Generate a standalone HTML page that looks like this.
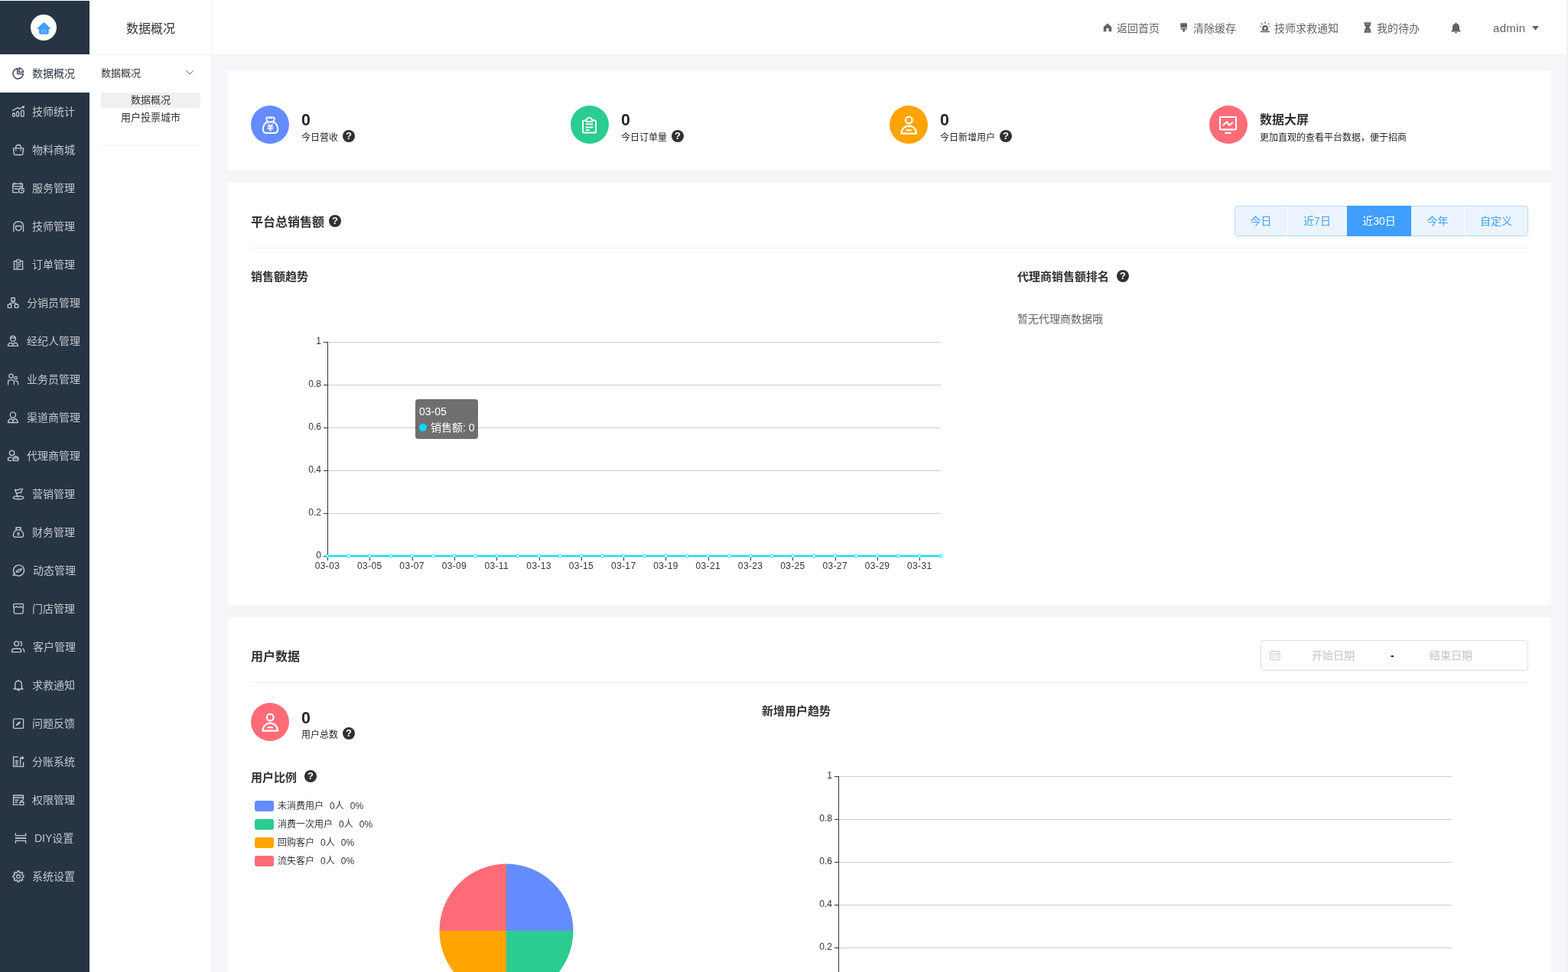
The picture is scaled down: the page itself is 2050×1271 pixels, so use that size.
<!DOCTYPE html>
<html lang="zh-CN"><head><meta charset="utf-8"><title>数据概况</title>
<style>
*{box-sizing:border-box;margin:0;padding:0}
html,body{width:2050px;height:1271px;overflow:hidden;background:#f5f6fa;}
#root{position:absolute;left:0;top:0;width:2050px;height:1271px;overflow:hidden;will-change:transform;background:#f5f6fa}
body{font-family:"Liberation Sans", "Noto Sans CJK SC", sans-serif;font-size:14px;color:#303133;position:relative;}
.abs{position:absolute}
.t{position:absolute;white-space:nowrap;line-height:1}
#side1{position:absolute;left:0;top:0;width:117px;height:1271px;background:#273444;border-top:1px solid #fff}
#side2{position:absolute;left:117px;top:0;width:160px;height:1271px;background:#fff;border-right:1px solid #f0f0f0}
#top{position:absolute;left:277px;top:0;width:1773px;height:72px;background:#fff;border-bottom:1px solid #f0f0f0}
.card{position:absolute;left:298px;width:1730px;background:#fff}
.mi{position:absolute;left:0;width:117px;height:50px;color:#c4c7cb;font-size:14px;margin-top:-1px}
.mi.on{background:#fff;color:#273444}
.mi svg{position:absolute;top:17px;width:16px;height:16px;overflow:visible}
.mi span{position:absolute;top:0;line-height:50px;white-space:nowrap}
.q{position:absolute;width:16px;height:16px;border-radius:50%;background:#303133;color:#fff;font-weight:bold;font-size:13px;line-height:16px;text-align:center}
.circ{position:absolute;width:50px;height:50px;border-radius:50%}
.num{position:absolute;font-size:22px;transform:scaleX(0.97);transform-origin:0 0;font-weight:bold;line-height:1;color:#262626}
.sub{position:absolute;font-size:12px;line-height:1;color:#262626;white-space:nowrap}
.h1{position:absolute;font-size:16px;font-weight:bold;line-height:1;color:#303133;white-space:nowrap}
.h2{position:absolute;font-size:14px;font-weight:bold;line-height:1;color:#303133;white-space:nowrap}
.hr{position:absolute;height:1px;background:#f0f0f0}
.nav{position:absolute;top:0;line-height:74px;font-size:14px;color:#606266;white-space:nowrap}
</style></head>
<body>
<div id="root">
<div id="side1">
<div class="abs" style="left:40px;top:18px;width:34px;height:34px;border-radius:50%;background:#fff"></div>
<svg class="abs" style="left:48px;top:26px" width="19" height="19" viewBox="0 0 19 19"><path d="M9.35 2.2 Q9.9 2.2 10.4 2.7 L18.2 10.2 Q18.6 10.9 17.8 10.9 H15.8 V15.6 Q15.8 17.8 13.6 17.8 H5.2 Q3 17.8 3 15.6 V10.9 H0.9 Q0.1 10.9 0.5 10.2 L8.3 2.7 Q8.8 2.2 9.35 2.2 Z" fill="#409eff"/><path d="M7.3 15.8 V13 L9.4 11.4 L11.5 13 V15.8" fill="none" stroke="#a6d2ff" stroke-width="1"/></svg>
<div class="mi on" style="top:71px"><svg style="left:16px" viewBox="0 0 16 16" fill="none" stroke="currentColor" stroke-width="1.35" stroke-linecap="round" stroke-linejoin="round"><path d="M6.8 1.6 A6.7 6.7 0 1 0 14.3 8.6 H6.8 Z"/><path d="M8.9 1 V6.4 H14.6 A6 6 0 0 0 8.9 1Z"/></svg><span style="left:42px">数据概况</span></div>
<div class="mi" style="top:121px"><svg style="left:16px" viewBox="0 0 16 16" fill="none" stroke="currentColor" stroke-width="1.35" stroke-linecap="round" stroke-linejoin="round"><rect x="0.5" y="10" width="2.9" height="4.4" rx="1.4"/><rect x="5.6" y="8" width="3.1" height="6.4" rx="1.4"/><rect x="11.6" y="6.4" width="3.6" height="8" rx="1.5"/><path d="M0.4 6.6 L7.4 2.6 L9.2 4.4 L15.4 1.4 M13.4 1.2 L15.5 1.3 L14.6 3.2"/></svg><span style="left:42px">技师统计</span></div>
<div class="mi" style="top:171px"><svg style="left:16px" viewBox="0 0 16 16" fill="none" stroke="currentColor" stroke-width="1.35" stroke-linecap="round" stroke-linejoin="round"><path d="M1.5 5.8 H14.7 L13.8 13.4 Q13.6 14.5 12.4 14.5 H3.8 Q2.6 14.5 2.4 13.4 Z"/><path d="M4.7 5.8 V4.8 Q4.7 1.5 8.1 1.5 Q11.5 1.5 11.5 4.8 V5.8"/><path d="M4.8 8.3 V8.5 M11.3 8.3 V8.5" stroke-width="1.7"/></svg><span style="left:42px">物料商城</span></div>
<div class="mi" style="top:221px"><svg style="left:16px" viewBox="0 0 16 16" fill="none" stroke="currentColor" stroke-width="1.35" stroke-linecap="round" stroke-linejoin="round"><path d="M7.2 13.6 H0.8 V2.4 H13.4 V6.6"/><path d="M3 1 V3.2 M11.2 1 V3.2 M0.8 5.6 H13.4 M3.2 9 H7.4"/><circle cx="11.9" cy="11" r="3.3"/><path d="M11.9 9.4 V11.2 H13.2" stroke-width="1"/></svg><span style="left:42px">服务管理</span></div>
<div class="mi" style="top:271px"><svg style="left:16px" viewBox="0 0 16 16" fill="none" stroke="currentColor" stroke-width="1.35" stroke-linecap="round" stroke-linejoin="round"><path d="M1.9 14.8 V8 Q1.9 1.7 8.2 1.7 Q14.5 1.7 14.5 8 V14.8"/><path d="M4.6 7.5 H11.8 V9.6 Q11.8 13.5 8.2 13.5 Q4.6 13.5 4.6 9.6 Z"/></svg><span style="left:42px">技师管理</span></div>
<div class="mi" style="top:321px"><svg style="left:16px" viewBox="0 0 16 16" fill="none" stroke="currentColor" stroke-width="1.35" stroke-linecap="round" stroke-linejoin="round"><path d="M5.4 3.5 H2.4 V14.4 H13.6 V3.5 H10.6"/><path d="M5.4 4.8 V3.2 Q5.4 1.3 8 1.3 Q10.6 1.3 10.6 3.2 V4.8 Z"/><path d="M5 7.4 H11 M5 9.9 H11 M5 12.3 H8"/></svg><span style="left:42px">订单管理</span></div>
<div class="mi" style="top:371px"><svg style="left:9px" viewBox="0 0 16 16" fill="none" stroke="currentColor" stroke-width="1.35" stroke-linecap="round" stroke-linejoin="round"><rect x="5.8" y="1.5" width="4.6" height="4.2" rx="0.4"/><rect x="1.3" y="10.1" width="4.6" height="4.2" rx="0.4"/><rect x="10.3" y="10.1" width="4.6" height="4.2" rx="0.4"/><path d="M8.1 5.8 V7.6 M3.6 10 Q3.6 7.8 8.1 7.8 Q12.6 7.8 12.6 10"/></svg><span style="left:35px">分销员管理</span></div>
<div class="mi" style="top:421px"><svg style="left:9px" viewBox="0 0 16 16" fill="none" stroke="currentColor" stroke-width="1.35" stroke-linecap="round" stroke-linejoin="round"><circle cx="7.9" cy="4.7" r="3.4"/><path d="M4.6 3.8 H11.2"/><path d="M1.4 14.4 Q1.4 10.6 5.6 10.1 L7.9 12.2 L10.2 10.1 Q14.4 10.6 14.4 14.4 Z M7.9 12.2 V14.4"/></svg><span style="left:35px">经纪人管理</span></div>
<div class="mi" style="top:471px"><svg style="left:9px" viewBox="0 0 16 16" fill="none" stroke="currentColor" stroke-width="1.35" stroke-linecap="round" stroke-linejoin="round"><circle cx="5.5" cy="3.7" r="2.6"/><path d="M1.6 14.7 V11.6 Q1.6 8.9 4.4 8.9 H6.6 Q9.4 8.9 9.4 11.6 V14.7"/><circle cx="11.7" cy="6.2" r="1.8"/><path d="M11.2 10.3 H12 Q14.6 10.3 14.6 12.6 V14.7"/></svg><span style="left:35px">业务员管理</span></div>
<div class="mi" style="top:521px"><svg style="left:9px" viewBox="0 0 16 16" fill="none" stroke="currentColor" stroke-width="1.35" stroke-linecap="round" stroke-linejoin="round"><circle cx="7.9" cy="4.5" r="3.6"/><path d="M1.4 14.5 Q1.8 10.6 5.8 9.4 L7.9 11.8 L10 9.4 Q14 10.6 14.4 14.5 Z M7.9 11.8 V14.4"/></svg><span style="left:35px">渠道商管理</span></div>
<div class="mi" style="top:571px"><svg style="left:9px" viewBox="0 0 16 16" fill="none" stroke="currentColor" stroke-width="1.35" stroke-linecap="round" stroke-linejoin="round"><circle cx="6.6" cy="4.3" r="3.2"/><path d="M6 9.8 Q1.4 9.8 1.4 12.2 Q1.4 14.4 4 14.4 H6"/><rect x="8" y="9.7" width="7" height="4.7" rx="1"/><path d="M10.1 9.6 V8.7 Q10.1 8.1 10.7 8.1 H12.3 Q12.9 8.1 12.9 8.7 V9.6 M8 11.9 H15" stroke-width="1"/></svg><span style="left:35px">代理商管理</span></div>
<div class="mi" style="top:621px"><svg style="left:16px" viewBox="0 0 16 16" fill="none" stroke="currentColor" stroke-width="1.35" stroke-linecap="round" stroke-linejoin="round"><ellipse cx="8" cy="12.7" rx="6.8" ry="2"/><path d="M3.6 2.2 L7.4 12.6 M3.6 2.2 Q6 3.4 8.4 2.2 Q10.8 1 13.6 1.6 Q11.4 4 11.6 6.4 Q9 5.6 7 6.8 Q6 7.4 5.4 7.2"/></svg><span style="left:42px">营销管理</span></div>
<div class="mi" style="top:671px"><svg style="left:16px" viewBox="0 0 16 16" fill="none" stroke="currentColor" stroke-width="1.35" stroke-linecap="round" stroke-linejoin="round"><path d="M5.6 4.6 L4.6 2.4 Q5.4 1.2 6.6 2 Q8 0.8 9.4 2 Q10.6 1.2 11.4 2.4 L10.4 4.6"/><path d="M5.4 4.8 H10.6 Q14.6 8 14.6 11.4 Q14.6 14.4 11.6 14.4 H4.4 Q1.4 14.4 1.4 11.4 Q1.4 8 5.4 4.8Z"/><path d="M6.6 7.8 L8 9.6 L9.4 7.8 M8 9.6 V12.4 M6.6 9.9 H9.4 M6.6 11.2 H9.4" stroke-width="0.9"/></svg><span style="left:42px">财务管理</span></div>
<div class="mi" style="top:721px"><svg style="left:16px" viewBox="0 0 16 16" fill="none" stroke="currentColor" stroke-width="1.35" stroke-linecap="round" stroke-linejoin="round"><path d="M3.3 12.6 A7 7 0 1 1 5.6 14.3 L0.9 13.8 Z"/><path d="M5 10.2 Q6.6 6.4 12.4 5.9 Q10.8 9.8 5 10.2 Z" stroke-width="1.2"/></svg><span style="left:43px">动态管理</span></div>
<div class="mi" style="top:771px"><svg style="left:16px" viewBox="0 0 16 16" fill="none" stroke="currentColor" stroke-width="1.35" stroke-linecap="round" stroke-linejoin="round"><path d="M2.3 6.6 V12.6 Q2.3 14.4 4.1 14.4 H12.3 Q14.1 14.4 14.1 12.6 V6.6"/><path d="M3.4 1.6 H13 Q14.8 1.6 14.8 3.4 V4.4 Q14.8 6.1 13 6.1 Q11.4 6.1 10.8 4.8 Q10 6.1 8.2 6.1 Q6.4 6.1 5.6 4.8 Q5 6.1 3.4 6.1 Q1.6 6.1 1.6 4.4 V3.4 Q1.6 1.6 3.4 1.6 Z"/></svg><span style="left:42px">门店管理</span></div>
<div class="mi" style="top:821px"><svg style="left:16px" viewBox="0 0 16 16" fill="none" stroke="currentColor" stroke-width="1.35" stroke-linecap="round" stroke-linejoin="round"><circle cx="5.6" cy="3.6" r="3"/><path d="M-0.4 14.6 V13 Q-0.4 10.2 2.6 10.2 H8.6 Q11.6 10.2 11.6 13 V14.6 Z"/><path d="M10.6 1 Q12.6 1.8 12.6 3.8 Q12.6 5.6 11 6.4 M13.6 10.2 Q15.6 11 15.6 13.4 V14.6"/></svg><span style="left:43px">客户管理</span></div>
<div class="mi" style="top:871px"><svg style="left:16px" viewBox="0 0 16 16" fill="none" stroke="currentColor" stroke-width="1.35" stroke-linecap="round" stroke-linejoin="round"><path d="M8.1 1.2 V2.2 M3.8 11.4 V7.2 Q3.8 2.4 8.1 2.4 Q12.4 2.4 12.4 7.2 V11.4 L14 13 H2.2 Z M6.8 14.6 H9.4"/></svg><span style="left:42px">求救通知</span></div>
<div class="mi" style="top:921px"><svg style="left:16px" viewBox="0 0 16 16" fill="none" stroke="currentColor" stroke-width="1.35" stroke-linecap="round" stroke-linejoin="round"><rect x="1.6" y="1.8" width="13" height="12.6" rx="2"/><path d="M5.4 10.4 L5.8 8.8 L9.6 5.6 L10.8 6.8 L7 10 Z" fill="currentColor" stroke-width="0.8"/></svg><span style="left:42px">问题反馈</span></div>
<div class="mi" style="top:971px"><svg style="left:16px" viewBox="0 0 16 16" fill="none" stroke="currentColor" stroke-width="1.35" stroke-linecap="round" stroke-linejoin="round"><path d="M14.6 9 V14.4 H1.6 V1.6 H7.6"/><path d="M10.6 12 V3 H14.4 M13 1.6 L14.8 3 L13 4.4"/><path d="M3.8 6.8 H8 M3.8 9.2 H8 M5.9 6 V11.6 M3.8 12.2 H8" stroke-width="1"/></svg><span style="left:42px">分账系统</span></div>
<div class="mi" style="top:1021px"><svg style="left:16px" viewBox="0 0 16 16" fill="none" stroke="currentColor" stroke-width="1.35" stroke-linecap="round" stroke-linejoin="round"><path d="M8.2 14.4 H1.6 V2 H14.4 V7.2"/><path d="M1.6 5 H14.4 M4 8.2 H8 M4 11 H6.6"/><rect x="10" y="10.8" width="5" height="3.8" rx="0.8"/><path d="M11.2 10.8 V9.8 Q11.2 8.4 12.5 8.4 Q13.8 8.4 13.8 9.8 V10.8"/></svg><span style="left:42px">权限管理</span></div>
<div class="mi" style="top:1071px"><svg style="left:19px" viewBox="0 0 16 16" fill="none" stroke="currentColor" stroke-width="1.35" stroke-linecap="round" stroke-linejoin="round"><path d="M1.4 1.2 V4.6 H14.6 V1.2 M1.4 14.8 V11.4 H14.6 V14.8" stroke-linecap="butt" stroke-linejoin="miter"/><path d="M0.8 8 H15.2" stroke-width="1.8" stroke-linecap="butt"/></svg><span style="left:45px">DIY设置</span></div>
<div class="mi" style="top:1121px"><svg style="left:16px" viewBox="0 0 16 16" fill="none" stroke="currentColor" stroke-width="1.35" stroke-linecap="round" stroke-linejoin="round"><path d="M6.66 2.77 L6.87 0.99 L9.13 0.99 L9.34 2.77 L10.75 3.36 L12.16 2.24 L13.76 3.84 L12.64 5.25 L13.23 6.66 L15.01 6.87 L15.01 9.13 L13.23 9.34 L12.64 10.75 L13.76 12.16 L12.16 13.76 L10.75 12.64 L9.34 13.23 L9.13 15.01 L6.87 15.01 L6.66 13.23 L5.25 12.64 L3.84 13.76 L2.24 12.16 L3.36 10.75 L2.77 9.34 L0.99 9.13 L0.99 6.87 L2.77 6.66 L3.36 5.25 L2.24 3.84 L3.84 2.24 L5.25 3.36 Z"/><circle cx="8" cy="8" r="2.3"/></svg><span style="left:42px">系统设置</span></div>
</div>
<div id="side2">
<div class="t" style="left:0;width:160px;text-align:center;top:30px;font-size:16px;color:#303133">数据概况</div>
<div class="hr" style="left:0;top:71px;width:160px;background:#f0f0f0"></div>
<div class="t" style="left:15px;top:89px;font-size:13px;color:#303133">数据概况</div>
<svg class="abs" style="left:125px;top:91px" width="12" height="8" viewBox="0 0 12 8"><path d="M1.2 1.4 L6 6 L10.8 1.4" fill="none" stroke="#606266" stroke-width="1"/></svg>
<div class="abs" style="left:15px;top:121px;width:130px;height:20px;background:#f0f0f0;border-radius:2px"></div>
<div class="t" style="left:15px;width:130px;text-align:center;top:124px;font-size:13px;color:#303133">数据概况</div>
<div class="t" style="left:15px;width:130px;text-align:center;top:147px;font-size:13px;color:#303133">用户投票城市</div>
<div class="hr" style="left:15px;top:190px;width:130px;background:#ebeef5"></div>
</div>
<div id="top">
<svg class="abs" style="left:1165px;top:30px" width="12" height="12" viewBox="0 0 12 12"><path d="M6 0.6 L11.2 5.2 V11.2 H7.6 V8.2 Q7.6 6.8 6 6.8 Q4.4 6.8 4.4 8.2 V11.2 H0.8 V5.2 Z" fill="#606266"/></svg>
<div class="nav" style="left:1183px">返回首页</div>
<svg class="abs" style="left:1265px;top:30px" width="12" height="13" viewBox="0 0 12 13"><path d="M1.4 0.3 H10 V5.9 H1.4 Z M1.4 6.7 H10 V7.6 Q10 8.4 9.2 8.4 H7 V10.6 Q7 11.9 5.7 11.9 Q4.4 11.9 4.4 10.6 V8.4 H2.2 Q1.4 8.4 1.4 7.6 Z" fill="#606266"/></svg>
<div class="nav" style="left:1283px">清除缓存</div>
<svg class="abs" style="left:1370px;top:28px" width="14" height="15" viewBox="0 0 14 15"><path d="M3.2 12 V8.6 Q3.2 5 7 5 Q10.8 5 10.8 8.6 V12 Z M7 7.4 Q5.4 7.4 5.4 9.2 Q5.4 10.6 7 10.6 Q8.6 10.6 8.6 9.2 Q8.6 7.4 7 7.4Z" fill="#606266" fill-rule="evenodd"/><rect x="0.8" y="12.6" width="12.4" height="1.6" fill="#606266"/><path d="M7 0.6 V3 M2 2.4 L3.4 4.2 M12 2.4 L10.6 4.2 M0.4 6.4 L1.8 6.9 M13.6 6.4 L12.2 6.9" stroke="#606266" stroke-width="1.2" fill="none"/></svg>
<div class="nav" style="left:1389px">技师求救通知</div>
<svg class="abs" style="left:1506px;top:29px" width="10" height="14" viewBox="0 0 10 14"><path d="M1 0.3 H9 Q9.6 0.3 9.6 0.9 V1.6 Q9.6 2.1 9 2.1 V3.6 Q9 5.6 6.8 7 Q9 8.4 9 10.4 V11.9 Q9.6 11.9 9.6 12.4 V13.1 Q9.6 13.7 9 13.7 H1 Q0.4 13.7 0.4 13.1 V12.4 Q0.4 11.9 1 11.9 V10.4 Q1 8.4 3.2 7 Q1 5.6 1 3.6 V2.1 Q0.4 2.1 0.4 1.6 V0.9 Q0.4 0.3 1 0.3 Z" fill="#606266"/><path d="M3 2.6 H7 M3.4 11.4 Q5 9.6 6.6 11.4" stroke="#c9cacc" stroke-width="0.8" fill="none"/></svg>
<div class="nav" style="left:1523px">我的待办</div>
<svg class="abs" style="left:1620px;top:29px" width="13" height="15" viewBox="0 0 13 15"><path d="M6.5 0.6 Q7.5 0.6 7.5 1.8 Q11 2.8 11 6.8 V10 L12.6 11.6 V12.4 H0.4 V11.6 L2 10 V6.8 Q2 2.8 5.5 1.8 Q5.5 0.6 6.5 0.6 Z M5 13 H8 Q8 14.5 6.5 14.5 Q5 14.5 5 13Z" fill="#606266"/></svg>
<div class="nav" style="left:1675px;font-size:15px;letter-spacing:0.3px">admin</div>
<svg class="abs" style="left:1726px;top:34px" width="9" height="6" viewBox="0 0 9 6"><path d="M0 0 H9 L4.5 5.4 Z" fill="#606266"/></svg>
</div>
<div class="abs" style="left:2048px;top:0;width:2px;height:1271px;background:linear-gradient(90deg,#f5f5f6 0,#f5f5f6 50%,#f0f0f0 50%)"></div>
<div class="abs" style="left:298px;top:92px;width:1730px;height:1179px;background:#f4f5f7"></div>
<div class="card" style="top:92px;height:131px">
<div class="circ" style="left:30px;top:46px;background:#648cff"></div>
<svg class="abs" style="left:30px;top:46px" width="50" height="50" viewBox="0 0 50 50" fill="none" stroke="#fff" stroke-width="2" stroke-linecap="round" stroke-linejoin="round"><path d="M21 21.4 C17.5 24 15.8 27.5 15.8 31 C15.8 34 17.8 36 21 36 H30 C33.2 36 35.2 34 35.2 31 C35.2 27.5 33.5 24 30 21.4 Z"/><path d="M21.6 21 L20.3 18 Q19.6 15.8 21.6 15.5 Q23.2 15.3 23.9 16.6 Q24.6 15 25.5 15 Q26.4 15 27.1 16.6 Q27.8 15.3 29.4 15.5 Q31.4 15.8 30.7 18 L29.4 21" stroke-width="1.8"/><path d="M22.7 24.5 L25.5 27.4 L28.3 24.5 M25.5 27.4 V33.3 M22.3 27.7 H28.7 M22.3 30.3 H28.7" stroke-width="1.6"/></svg>
<div class="num" style="left:96px;top:54px">0</div>
<div class="sub" style="left:96px;top:82px">今日营收</div>
<div class="q" style="left:150px;top:78px">?</div>
<div class="circ" style="left:448px;top:46px;background:#2acc8f"></div>
<svg class="abs" style="left:448px;top:46px" width="50" height="50" viewBox="0 0 50 50" fill="none" stroke="#fff" stroke-width="2" stroke-linecap="round" stroke-linejoin="round"><path d="M20.6 19.6 H17.6 Q16 19.6 16 21.2 V34 Q16 35.6 17.6 35.6 H31.4 Q33 35.6 33 34 V21.2 Q33 19.6 31.4 19.6 H28.4"/><path d="M20.6 21 Q19.6 18.6 21.6 17.6 Q22.4 15.6 24.5 15.6 Q26.6 15.6 27.4 17.6 Q29.4 18.6 28.4 21 Z" stroke-width="1.8"/><path d="M20.4 24.4 H28.6 M20.4 28.5 H28.6 M20.4 32.2 H24" stroke-width="1.8"/></svg>
<div class="num" style="left:514px;top:54px">0</div>
<div class="sub" style="left:514px;top:82px">今日订单量</div>
<div class="q" style="left:580px;top:78px">?</div>
<div class="circ" style="left:865px;top:46px;background:#ffa400"></div>
<svg class="abs" style="left:865px;top:46px" width="50" height="50" viewBox="0 0 50 50" fill="none" stroke="#fff" stroke-width="2" stroke-linecap="round" stroke-linejoin="round"><circle cx="25.25" cy="19.1" r="4.4" stroke-width="2.2"/><path d="M15.4 36.7 A9.85 10.1 0 0 1 35.1 36.7 Z" stroke-width="2.2"/><path d="M22.4 32.2 H28.1"/></svg>
<div class="num" style="left:931px;top:54px">0</div>
<div class="sub" style="left:931px;top:82px">今日新增用户</div>
<div class="q" style="left:1009px;top:78px">?</div>
<div class="circ" style="left:1283px;top:46px;background:#ff6c78"></div>
<svg class="abs" style="left:1283px;top:46px" width="50" height="50" viewBox="0 0 50 50" fill="none" stroke="#fff" stroke-width="2" stroke-linecap="round" stroke-linejoin="round"><rect x="14" y="15.05" width="21" height="16.3" rx="1" stroke-width="2.1"/><path d="M18.2 25.4 L23.2 21.2 L26 26 L30.3 22.3"/><path d="M21.2 35.85 H27.8" stroke-width="2.2"/></svg>
<div class="h1" style="left:1349px;top:57px">数据大屏</div>
<div class="sub" style="left:1349px;top:82px">更加直观的查看平台数据，便于招商</div>
</div>
<div class="card" style="top:239px;height:552px">
<div class="h1" style="left:30px;top:44px">平台总销售额</div>
<div class="q" style="left:132px;top:42px">?</div>
<div class="abs" style="left:1316px;top:30px;width:384px;height:40px;border:1px solid #b3d8ff;border-radius:4px;background:#ecf5ff"></div>
<div class="t" style="left:1316px;width:69px;text-align:center;top:43px;font-size:14px;color:#409eff">今日</div>
<div class="abs" style="left:1385px;top:31px;width:1px;height:38px;background:#f5faff"></div>
<div class="t" style="left:1385px;width:78px;text-align:center;top:43px;font-size:14px;color:#409eff">近7日</div>
<div class="abs" style="left:1463px;top:30px;width:84px;height:40px;background:#409eff"></div>
<div class="t" style="left:1463px;width:84px;text-align:center;top:43px;font-size:14px;color:#fff">近30日</div>
<div class="t" style="left:1547px;width:69px;text-align:center;top:43px;font-size:14px;color:#409eff">今年</div>
<div class="abs" style="left:1616px;top:31px;width:1px;height:38px;background:#f5faff"></div>
<div class="t" style="left:1616px;width:84px;text-align:center;top:43px;font-size:14px;color:#409eff">自定义</div>
<div class="hr" style="left:30px;top:85px;width:1670px"></div>
<div class="h2" style="left:30px;top:115px;font-size:15px">销售额趋势</div>
<div class="h2" style="left:1032px;top:115px;font-size:15px">代理商销售额排名</div>
<div class="q" style="left:1162px;top:114px">?</div>
<div class="sub" style="left:1032px;top:171px;font-size:14px;color:#606266">暂无代理商数据哦</div>
<svg class="abs" style="left:0;top:0" width="1730" height="552" font-family='&quot;Liberation Sans&quot;, &quot;Noto Sans CJK SC&quot;, sans-serif'>
<rect x="130" y="208" width="802" height="1" fill="#ccc"/>
<rect x="125" y="208" width="5" height="1" fill="#333"/>
<text x="122" y="211" text-anchor="end" font-size="12" fill="#333">1</text>
<rect x="130" y="264" width="802" height="1" fill="#ccc"/>
<rect x="125" y="264" width="5" height="1" fill="#333"/>
<text x="122" y="267" text-anchor="end" font-size="12" fill="#333">0.8</text>
<rect x="130" y="320" width="802" height="1" fill="#ccc"/>
<rect x="125" y="320" width="5" height="1" fill="#333"/>
<text x="122" y="323" text-anchor="end" font-size="12" fill="#333">0.6</text>
<rect x="130" y="376" width="802" height="1" fill="#ccc"/>
<rect x="125" y="376" width="5" height="1" fill="#333"/>
<text x="122" y="379" text-anchor="end" font-size="12" fill="#333">0.4</text>
<rect x="130" y="432" width="802" height="1" fill="#ccc"/>
<rect x="125" y="432" width="5" height="1" fill="#333"/>
<text x="122" y="435" text-anchor="end" font-size="12" fill="#333">0.2</text>
<rect x="125" y="488" width="5" height="1" fill="#333"/>
<text x="122" y="491" text-anchor="end" font-size="12" fill="#333">0</text>
<rect x="130" y="208" width="1" height="281" fill="#333"/>
<rect x="130.0" y="489" width="1" height="5" fill="#333"/>
<text x="130.0" y="505" text-anchor="middle" font-size="12" letter-spacing="0.35" fill="#333">03-03</text>
<rect x="185.0" y="489" width="1" height="5" fill="#333"/>
<text x="185.3" y="505" text-anchor="middle" font-size="12" letter-spacing="0.35" fill="#333">03-05</text>
<rect x="241.0" y="489" width="1" height="5" fill="#333"/>
<text x="240.6" y="505" text-anchor="middle" font-size="12" letter-spacing="0.35" fill="#333">03-07</text>
<rect x="296.0" y="489" width="1" height="5" fill="#333"/>
<text x="295.9" y="505" text-anchor="middle" font-size="12" letter-spacing="0.35" fill="#333">03-09</text>
<rect x="351.0" y="489" width="1" height="5" fill="#333"/>
<text x="351.2" y="505" text-anchor="middle" font-size="12" letter-spacing="0.35" fill="#333">03-11</text>
<rect x="407.0" y="489" width="1" height="5" fill="#333"/>
<text x="406.6" y="505" text-anchor="middle" font-size="12" letter-spacing="0.35" fill="#333">03-13</text>
<rect x="462.0" y="489" width="1" height="5" fill="#333"/>
<text x="461.9" y="505" text-anchor="middle" font-size="12" letter-spacing="0.35" fill="#333">03-15</text>
<rect x="517.0" y="489" width="1" height="5" fill="#333"/>
<text x="517.2" y="505" text-anchor="middle" font-size="12" letter-spacing="0.35" fill="#333">03-17</text>
<rect x="572.0" y="489" width="1" height="5" fill="#333"/>
<text x="572.5" y="505" text-anchor="middle" font-size="12" letter-spacing="0.35" fill="#333">03-19</text>
<rect x="628.0" y="489" width="1" height="5" fill="#333"/>
<text x="627.8" y="505" text-anchor="middle" font-size="12" letter-spacing="0.35" fill="#333">03-21</text>
<rect x="683.0" y="489" width="1" height="5" fill="#333"/>
<text x="683.1" y="505" text-anchor="middle" font-size="12" letter-spacing="0.35" fill="#333">03-23</text>
<rect x="738.0" y="489" width="1" height="5" fill="#333"/>
<text x="738.4" y="505" text-anchor="middle" font-size="12" letter-spacing="0.35" fill="#333">03-25</text>
<rect x="794.0" y="489" width="1" height="5" fill="#333"/>
<text x="793.7" y="505" text-anchor="middle" font-size="12" letter-spacing="0.35" fill="#333">03-27</text>
<rect x="849.0" y="489" width="1" height="5" fill="#333"/>
<text x="849.0" y="505" text-anchor="middle" font-size="12" letter-spacing="0.35" fill="#333">03-29</text>
<rect x="904.0" y="489" width="1" height="5" fill="#333"/>
<text x="904.3" y="505" text-anchor="middle" font-size="12" letter-spacing="0.35" fill="#333">03-31</text>
<rect x="130" y="487" width="802" height="2" fill="#00dcff"/>
<circle cx="130.0" cy="488.0" r="2" fill="#fff" stroke="#00dcff" stroke-width="1"/>
<circle cx="157.7" cy="488.0" r="2" fill="#fff" stroke="#00dcff" stroke-width="1"/>
<circle cx="185.3" cy="488.0" r="2" fill="#fff" stroke="#00dcff" stroke-width="1"/>
<circle cx="213.0" cy="488.0" r="2" fill="#fff" stroke="#00dcff" stroke-width="1"/>
<circle cx="240.6" cy="488.0" r="2" fill="#fff" stroke="#00dcff" stroke-width="1"/>
<circle cx="268.3" cy="488.0" r="2" fill="#fff" stroke="#00dcff" stroke-width="1"/>
<circle cx="295.9" cy="488.0" r="2" fill="#fff" stroke="#00dcff" stroke-width="1"/>
<circle cx="323.6" cy="488.0" r="2" fill="#fff" stroke="#00dcff" stroke-width="1"/>
<circle cx="351.2" cy="488.0" r="2" fill="#fff" stroke="#00dcff" stroke-width="1"/>
<circle cx="378.9" cy="488.0" r="2" fill="#fff" stroke="#00dcff" stroke-width="1"/>
<circle cx="406.6" cy="488.0" r="2" fill="#fff" stroke="#00dcff" stroke-width="1"/>
<circle cx="434.2" cy="488.0" r="2" fill="#fff" stroke="#00dcff" stroke-width="1"/>
<circle cx="461.9" cy="488.0" r="2" fill="#fff" stroke="#00dcff" stroke-width="1"/>
<circle cx="489.5" cy="488.0" r="2" fill="#fff" stroke="#00dcff" stroke-width="1"/>
<circle cx="517.2" cy="488.0" r="2" fill="#fff" stroke="#00dcff" stroke-width="1"/>
<circle cx="544.8" cy="488.0" r="2" fill="#fff" stroke="#00dcff" stroke-width="1"/>
<circle cx="572.5" cy="488.0" r="2" fill="#fff" stroke="#00dcff" stroke-width="1"/>
<circle cx="600.1" cy="488.0" r="2" fill="#fff" stroke="#00dcff" stroke-width="1"/>
<circle cx="627.8" cy="488.0" r="2" fill="#fff" stroke="#00dcff" stroke-width="1"/>
<circle cx="655.4" cy="488.0" r="2" fill="#fff" stroke="#00dcff" stroke-width="1"/>
<circle cx="683.1" cy="488.0" r="2" fill="#fff" stroke="#00dcff" stroke-width="1"/>
<circle cx="710.8" cy="488.0" r="2" fill="#fff" stroke="#00dcff" stroke-width="1"/>
<circle cx="738.4" cy="488.0" r="2" fill="#fff" stroke="#00dcff" stroke-width="1"/>
<circle cx="766.1" cy="488.0" r="2" fill="#fff" stroke="#00dcff" stroke-width="1"/>
<circle cx="793.7" cy="488.0" r="2" fill="#fff" stroke="#00dcff" stroke-width="1"/>
<circle cx="821.4" cy="488.0" r="2" fill="#fff" stroke="#00dcff" stroke-width="1"/>
<circle cx="849.0" cy="488.0" r="2" fill="#fff" stroke="#00dcff" stroke-width="1"/>
<circle cx="876.7" cy="488.0" r="2" fill="#fff" stroke="#00dcff" stroke-width="1"/>
<circle cx="904.3" cy="488.0" r="2" fill="#fff" stroke="#00dcff" stroke-width="1"/>
<circle cx="932.0" cy="488.0" r="2" fill="#fff" stroke="#00dcff" stroke-width="1"/>
</svg>
<div class="abs" style="left:245px;top:283px;width:82px;height:52px;background:rgba(50,50,50,0.7);border-radius:4px"></div>
<div class="t" style="left:250px;top:292px;font-size:14px;color:#fff">03-05</div>
<div class="abs" style="left:250px;top:315px;width:10px;height:10px;border-radius:50%;background:#00dcff"></div>
<div class="t" style="left:265px;top:313px;font-size:14px;color:#fff">销售额: 0</div>
</div>
<div class="card" style="top:807px;height:480px">
<div class="h1" style="left:30px;top:44px">用户数据</div>
<div class="abs" style="left:1350px;top:30px;width:350px;height:40px;border:1px solid #dcdfe6;border-radius:4px;background:#fff"></div>
<svg class="abs" style="left:1362px;top:43px" width="14" height="14" viewBox="0 0 14 14" fill="none" stroke="#c0c4cc" stroke-width="1"><rect x="0.8" y="1.8" width="12.4" height="11" rx="0.8"/><path d="M0.8 5 H13.2 M3.8 0.6 V2.6 M10.2 0.6 V2.6"/><path d="M3 7.6 H11 M3 10.2 H11" stroke-dasharray="1.4 0.8"/></svg>
<div class="t" style="left:1385px;width:120px;text-align:center;top:43px;font-size:14px;color:#c0c4cc">开始日期</div>
<div class="t" style="left:1520px;top:43px;font-size:14px;font-weight:bold;color:#000">-</div>
<div class="t" style="left:1539px;width:120px;text-align:center;top:43px;font-size:14px;color:#c0c4cc">结束日期</div>
<div class="hr" style="left:30px;top:85px;width:1670px"></div>
<div class="circ" style="left:30px;top:112px;background:#ff6c78"></div>
<svg class="abs" style="left:30px;top:112px" width="50" height="50" viewBox="0 0 50 50" fill="none" stroke="#fff" stroke-width="2" stroke-linecap="round" stroke-linejoin="round"><circle cx="25.25" cy="19.1" r="4.4" stroke-width="2.2"/><path d="M15.4 36.7 A9.85 10.1 0 0 1 35.1 36.7 Z" stroke-width="2.2"/><path d="M22.4 32.2 H28.1"/></svg>
<div class="num" style="left:96px;top:121px">0</div>
<div class="sub" style="left:96px;top:148px">用户总数</div>
<div class="q" style="left:150px;top:144px">?</div>
<div class="h2" style="left:698px;top:115px;font-size:15px">新增用户趋势</div>
<div class="h2" style="left:30px;top:202px;font-size:15px">用户比例</div>
<div class="q" style="left:100px;top:200px">?</div>
<svg class="abs" style="left:0;top:0" width="1730" height="480" font-family='&quot;Liberation Sans&quot;, &quot;Noto Sans CJK SC&quot;, sans-serif'>
<rect x="798" y="208" width="802" height="1" fill="#ccc"/>
<rect x="793" y="208" width="5" height="1" fill="#333"/>
<text x="790" y="211" text-anchor="end" font-size="12" fill="#333">1</text>
<rect x="798" y="264" width="802" height="1" fill="#ccc"/>
<rect x="793" y="264" width="5" height="1" fill="#333"/>
<text x="790" y="267" text-anchor="end" font-size="12" fill="#333">0.8</text>
<rect x="798" y="320" width="802" height="1" fill="#ccc"/>
<rect x="793" y="320" width="5" height="1" fill="#333"/>
<text x="790" y="323" text-anchor="end" font-size="12" fill="#333">0.6</text>
<rect x="798" y="376" width="802" height="1" fill="#ccc"/>
<rect x="793" y="376" width="5" height="1" fill="#333"/>
<text x="790" y="379" text-anchor="end" font-size="12" fill="#333">0.4</text>
<rect x="798" y="432" width="802" height="1" fill="#ccc"/>
<rect x="793" y="432" width="5" height="1" fill="#333"/>
<text x="790" y="435" text-anchor="end" font-size="12" fill="#333">0.2</text>
<rect x="793" y="488" width="5" height="1" fill="#333"/>
<text x="790" y="491" text-anchor="end" font-size="12" fill="#333">0</text>
<rect x="798" y="208" width="1" height="281" fill="#333"/>
<rect x="35" y="240" width="25" height="14" rx="3" fill="#648cff"/>
<text x="65" y="251" font-size="12" fill="#333" word-spacing="0.7" xml:space="preserve">未消费用户  0人  0%</text>
<rect x="35" y="264" width="25" height="14" rx="3" fill="#2acc8f"/>
<text x="65" y="275" font-size="12" fill="#333" word-spacing="0.7" xml:space="preserve">消费一次用户  0人  0%</text>
<rect x="35" y="288" width="25" height="14" rx="3" fill="#ffa400"/>
<text x="65" y="299" font-size="12" fill="#333" word-spacing="0.7" xml:space="preserve">回购客户  0人  0%</text>
<rect x="35" y="312" width="25" height="14" rx="3" fill="#ff6c78"/>
<text x="65" y="323" font-size="12" fill="#333" word-spacing="0.7" xml:space="preserve">流失客户  0人  0%</text>
<path d="M364.00 410.00 L364.00 322.50 A87.5 87.5 0 0 1 451.50 410.00 Z" fill="#648cff"/>
<path d="M364.00 410.00 L451.50 410.00 A87.5 87.5 0 0 1 364.00 497.50 Z" fill="#2acc8f"/>
<path d="M364.00 410.00 L364.00 497.50 A87.5 87.5 0 0 1 276.50 410.00 Z" fill="#ffa400"/>
<path d="M364.00 410.00 L276.50 410.00 A87.5 87.5 0 0 1 364.00 322.50 Z" fill="#ff6c78"/>
</svg>
</div>
</div>
</body></html>
